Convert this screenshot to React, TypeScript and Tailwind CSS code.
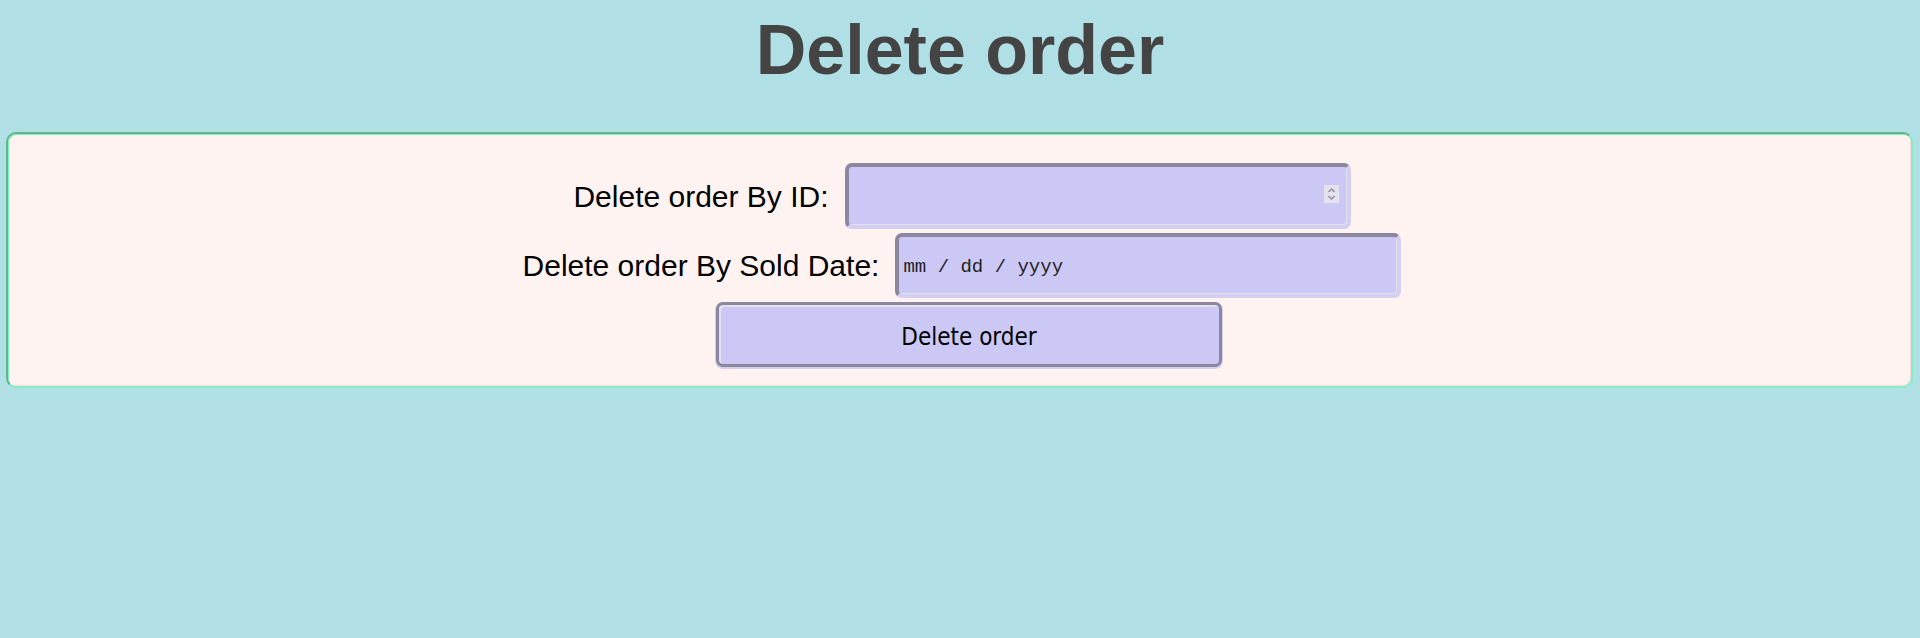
import { useState } from "react";

const fieldBox =
  "w-[506px] rounded-[7px] border-[4px] border-t-[#8b879e] border-l-[#8b879e] border-b-[#d3cfef] border-r-[#d3cfef] bg-[#ccc8f6] shadow-[inset_-1px_-1px_0_#e2e0ea] outline-none";

export default function App() {
  const [orderId, setOrderId] = useState("");
  const [soldDate, setSoldDate] = useState("");

  return (
    <div className="min-h-screen bg-[#b0e0e6] font-['Liberation_Sans',Arial,sans-serif]">
      <h1 className="pt-[10px] text-center text-[70px] font-bold leading-[80px] text-[#444444]">Delete order</h1>

      <div className="mt-[42px] ml-[6px] mr-[7px] rounded-[10px] border-2 border-t-[#63b488] border-l-[#63b488] border-b-[#7ff0c4] border-r-[#7ff0c4] bg-[#fff3f2] pt-[29px] pb-[19px] shadow-[inset_1px_1px_0_#7ff0c4,inset_-1px_-1px_0_#ffd9d9]">
        <div className="flex flex-col items-center gap-[4px] pl-[5px]">
          <div className="flex h-[66px] items-center gap-[16px]">
            <label className="text-[30px] text-black">Delete order By ID:</label>
            <div className="relative">
              <input
                type="text"
                value={orderId}
                onChange={(e) => setOrderId(e.target.value)}
                className={`${fieldBox} h-[66px] px-2 text-[19px]`}
              />
              <span className="absolute right-[12px] top-[22px] flex h-[18px] w-[15px] flex-col items-center justify-center bg-[#e4e2ee]">
                <svg width="9" height="14" viewBox="0 0 9 14" fill="none" stroke="#8a8a96" strokeWidth="1.3">
                  <path d="M1.5 5 L4.5 2 L7.5 5" />
                  <path d="M1.5 9 L4.5 12 L7.5 9" />
                </svg>
              </span>
            </div>
          </div>

          <div className="flex h-[65px] items-center gap-[16px]">
            <label className="text-[30px] text-black">Delete order By Sold Date:</label>
            <input
              type="text"
              value={soldDate}
              onChange={(e) => setSoldDate(e.target.value)}
              placeholder="mm / dd / yyyy"
              className={`${fieldBox} h-[65px] px-[4px] pt-[2px] font-['Liberation_Mono','Courier_New',monospace] text-[19px] text-[#222] placeholder:text-[#222]`}
            />
          </div>

          <button className="ml-[14px] h-[65px] w-[506px] rounded-[7px] border-[3px] border-[#8b879e] bg-[#ccc8f6] pt-[4px] font-['DejaVu_Sans_Condensed','DejaVu_Sans',sans-serif] text-[24px] text-black shadow-[inset_2px_2px_0_#e3e1ea,0_1px_0_1px_#d3cfef]">
            Delete order
          </button>
        </div>
      </div>
    </div>
  );
}
